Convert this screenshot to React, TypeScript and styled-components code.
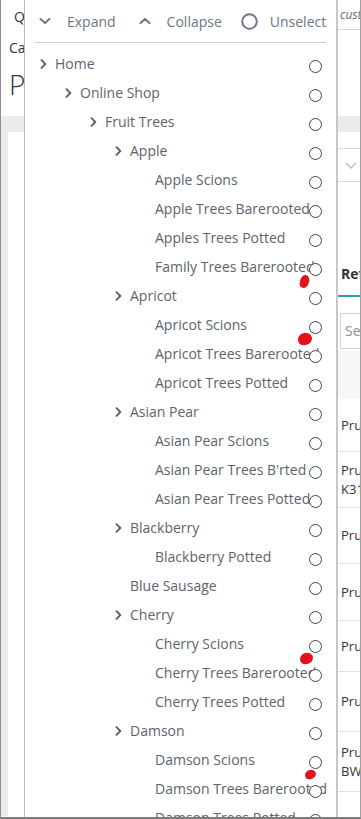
import React from 'react';
import styled, { createGlobalStyle } from 'styled-components';

const GlobalStyle = createGlobalStyle`
  html, body {
    margin: 0;
    padding: 0;
    background: #fff;
  }
  body {
    font-family: "Open Sans", "Liberation Sans", sans-serif;
  }
  * {
    box-sizing: border-box;
  }
`;

interface TreeNode {
  label: string;
  level: number;
  branch?: boolean;
}

const treeNodes: TreeNode[] = [
  { label: 'Home', level: 0, branch: true },
  { label: 'Online Shop', level: 1, branch: true },
  { label: 'Fruit Trees', level: 2, branch: true },
  { label: 'Apple', level: 3, branch: true },
  { label: 'Apple Scions', level: 4 },
  { label: 'Apple Trees Barerooted', level: 4 },
  { label: 'Apples Trees Potted', level: 4 },
  { label: 'Family Trees Barerooted', level: 4 },
  { label: 'Apricot', level: 3, branch: true },
  { label: 'Apricot Scions', level: 4 },
  { label: 'Apricot Trees Barerooted', level: 4 },
  { label: 'Apricot Trees Potted', level: 4 },
  { label: 'Asian Pear', level: 3, branch: true },
  { label: 'Asian Pear Scions', level: 4 },
  { label: "Asian Pear Trees B'rted", level: 4 },
  { label: 'Asian Pear Trees Potted', level: 4 },
  { label: 'Blackberry', level: 3, branch: true },
  { label: 'Blackberry Potted', level: 4 },
  { label: 'Blue Sausage', level: 3 },
  { label: 'Cherry', level: 3, branch: true },
  { label: 'Cherry Scions', level: 4 },
  { label: 'Cherry Trees Barerooted', level: 4 },
  { label: 'Cherry Trees Potted', level: 4 },
  { label: 'Damson', level: 3, branch: true },
  { label: 'Damson Scions', level: 4 },
  { label: 'Damson Trees Barerooted', level: 4 },
  { label: 'Damson Trees Potted', level: 4 },
];

// rows of the product table peeking out on the right
const productRows: { lines: string[]; height: number }[] = [
  { lines: ['Prunus avium Stella'], height: 53 },
  { lines: ['Prunus cerasus', 'K31 Morello'], height: 56 },
  { lines: ['Prunus domestica'], height: 56 },
  { lines: ['Prunus insititia'], height: 57 },
  { lines: ['Prunus persica'], height: 51 },
  { lines: ['Prunus armeniaca'], height: 60 },
  { lines: ['Prunus avium', 'BW-Sunburst'], height: 60 },
  { lines: ['Prunus cerasifera'], height: 60 },
];

// red pen marks drawn over the screenshot
const penMarks = [
  { x: 299, y: 275, w: 9, h: 13, r: 14 },
  { x: 297, y: 333, w: 14, h: 12, r: -8 },
  { x: 299, y: 653, w: 13, h: 11, r: -10 },
  { x: 304, y: 770, w: 11, h: 9, r: -12 },
];

const Frame = styled.div`
  position: relative;
  width: 361px;
  height: 819px;
  overflow: hidden;
  background: #fff;
  border-left: 1px solid #8e8e8e;
  border-right: 1px solid #a0a0a0;
  border-bottom: 2px solid #7c7c7c;
`;

/* ---------- page behind the dropdown ---------- */

const Header = styled.header`
  height: 116px;
  padding-left: 8px;
  color: #333;
`;

const SearchRow = styled.div`
  display: grid;
  grid-template-columns: 328px 1fr;
  align-items: center;
  height: 32px;
`;

const QuickLabel = styled.span`
  padding-left: 5px;
  font-size: 14px;
  white-space: nowrap;
`;

const SearchField = styled.div`
  height: 30px;
  line-height: 30px;
  padding-left: 3px;
  border-bottom: 1px solid #d4d6d8;
  font-size: 12px;
  font-style: italic;
  color: #6a6a6a;
  white-space: nowrap;
  align-self: start;
`;

const Breadcrumb = styled.div`
  height: 32px;
  line-height: 32px;
  font-size: 14px;
`;

const Title = styled.h1`
  margin: 0;
  height: 40px;
  line-height: 40px;
  font-size: 28px;
  font-weight: 300;
`;

const Body = styled.main`
  background: #ebebeb;
  padding: 16px 0 0 7px;
  height: 700px;
`;

const Card = styled.section`
  display: grid;
  grid-template-columns: 322px 38px;
  background: #fff;
  height: 100%;
`;

const Column = styled.div`
  display: flex;
  flex-direction: column;
  padding-top: 16px;
`;

const SelectBox = styled.div`
  height: 34px;
  display: flex;
  align-items: center;
  justify-content: flex-end;
  padding-right: 10px;
  border: 1px solid #d6d9dc;
  color: #b7bcc1;
`;

const TabLabel = styled.div`
  margin: 71px 0 0 8px;
  padding-left: 3px;
  height: 44px;
  line-height: 42px;
  font-size: 14px;
  font-weight: 700;
  color: #333;
  border-bottom: 2px solid #2e9bad;
  white-space: nowrap;
`;

const FilterInput = styled.div`
  margin: 16px 0 0 10px;
  height: 36px;
  line-height: 34px;
  padding-left: 4px;
  border: 1px solid #cfd3d7;
  font-size: 14px;
  color: #8a8f94;
  white-space: nowrap;
`;

const TableHead = styled.div`
  margin: 2px 0 0 8px;
  height: 48px;
  background: #f6f7f8;
`;

const TableRow = styled.div<{ $height: number }>`
  margin-left: 8px;
  padding-left: 3px;
  height: ${p => p.$height}px;
  display: flex;
  flex-direction: column;
  justify-content: center;
  border-bottom: 1px solid #e1e4e7;
  font-size: 13px;
  line-height: 19px;
  color: #333;
  white-space: nowrap;
`;

/* ---------- dropdown tree ---------- */

const Dropdown = styled.div`
  position: absolute;
  left: 23px;
  top: 0;
  bottom: 0;
  width: 314px;
  background: #fff;
  border-left: 1px solid #b3bcc4;
  border-right: 2px solid #c4c8cc;
  overflow: hidden;
`;

const Toolbar = styled.div`
  display: flex;
  align-items: center;
  height: 42px;
  padding-left: 14px;
  color: #6d7781;
  font-size: 14px;
`;

const ToolButton = styled.span<{ $gap: number; $after?: number }>`
  display: flex;
  align-items: center;
  gap: ${p => p.$gap}px;
  margin-right: ${p => p.$after ?? 0}px;
  white-space: nowrap;
`;

const Divider = styled.hr`
  margin: 0 10px;
  border: 0;
  border-top: 1px solid #c8cdd2;
`;

const TreeList = styled.ul`
  list-style: none;
  margin: 0;
  padding: 6px 0 0;
`;

const TreeRow = styled.li<{ $level: number }>`
  position: relative;
  display: flex;
  align-items: center;
  height: 29px;
  padding-left: ${p => 15 + p.$level * 25}px;
  font-size: 14px;
  color: #5b646d;
  white-space: nowrap;
`;

const Caret = styled.span`
  flex: none;
  width: 15px;
  display: flex;
  align-items: center;
  color: #59616a;
`;

const Radio = styled.span`
  position: absolute;
  right: 14px;
  top: 11px;
  width: 13px;
  height: 13px;
  border: 1px solid #3e444a;
  border-radius: 50%;
  background: #fff;
`;

const PenMark = styled.span<{ $x: number; $y: number; $w: number; $h: number; $r: number }>`
  position: absolute;
  left: ${p => p.$x}px;
  top: ${p => p.$y}px;
  width: ${p => p.$w}px;
  height: ${p => p.$h}px;
  background: #e5121b;
  border-radius: 50% 45% 50% 40%;
  transform: rotate(${p => p.$r}deg);
`;

const ChevronDown = () => (
  <svg width="12" height="8" viewBox="0 0 12 8" fill="none">
    <path d="M1.5 2l4.5 4 4.5-4" stroke="currentColor" strokeWidth="2" strokeLinecap="round" strokeLinejoin="round" />
  </svg>
);

const ChevronUp = () => (
  <svg width="12" height="8" viewBox="0 0 12 8" fill="none">
    <path d="M1.5 6l4.5-4 4.5 4" stroke="currentColor" strokeWidth="2" strokeLinecap="round" strokeLinejoin="round" />
  </svg>
);

const RingIcon = () => (
  <svg width="17" height="17" viewBox="0 0 17 17" fill="none">
    <circle cx="8.5" cy="8.5" r="7.3" stroke="currentColor" strokeWidth="2" />
  </svg>
);

const ChevronRight = () => (
  <svg width="7" height="10" viewBox="0 0 7 10" fill="none">
    <path d="M1.5 1.2l3.8 3.8-3.8 3.8" stroke="currentColor" strokeWidth="1.9" strokeLinecap="round" strokeLinejoin="round" />
  </svg>
);

const SelectChevron = () => (
  <svg width="12" height="7" viewBox="0 0 12 7" fill="none">
    <path d="M1 1l5 5 5-5" stroke="currentColor" strokeWidth="1.4" />
  </svg>
);

export default function App() {
  return (
    <Frame>
      <GlobalStyle />
      <Header>
        <SearchRow>
          <QuickLabel>Quick search</QuickLabel>
          <SearchField>customer, order or product</SearchField>
        </SearchRow>
        <Breadcrumb>Catalogue / Products</Breadcrumb>
        <Title>Products</Title>
      </Header>

      <Body>
        <Card>
          <Column />
          <Column>
            <SelectBox>
              <SelectChevron />
            </SelectBox>
            <TabLabel>Reference</TabLabel>
            <FilterInput>Search</FilterInput>
            <TableHead />
            {productRows.map((row, i) => (
              <TableRow key={i} $height={row.height}>
                {row.lines.map(line => (
                  <span key={line}>{line}</span>
                ))}
              </TableRow>
            ))}
          </Column>
        </Card>
      </Body>

      <Dropdown>
        <Toolbar>
          <ToolButton $gap={16} $after={23}>
            <ChevronDown />
            Expand
          </ToolButton>
          <ToolButton $gap={16} $after={19}>
            <ChevronUp />
            Collapse
          </ToolButton>
          <ToolButton $gap={12}>
            <RingIcon />
            Unselect
          </ToolButton>
        </Toolbar>
        <Divider />
        <TreeList>
          {treeNodes.map(node => (
            <TreeRow key={node.label} $level={node.level}>
              <Caret>{node.branch && <ChevronRight />}</Caret>
              {node.label}
              <Radio />
            </TreeRow>
          ))}
        </TreeList>
      </Dropdown>

      {penMarks.map((m, i) => (
        <PenMark key={i} $x={m.x} $y={m.y} $w={m.w} $h={m.h} $r={m.r} />
      ))}
    </Frame>
  );
}
